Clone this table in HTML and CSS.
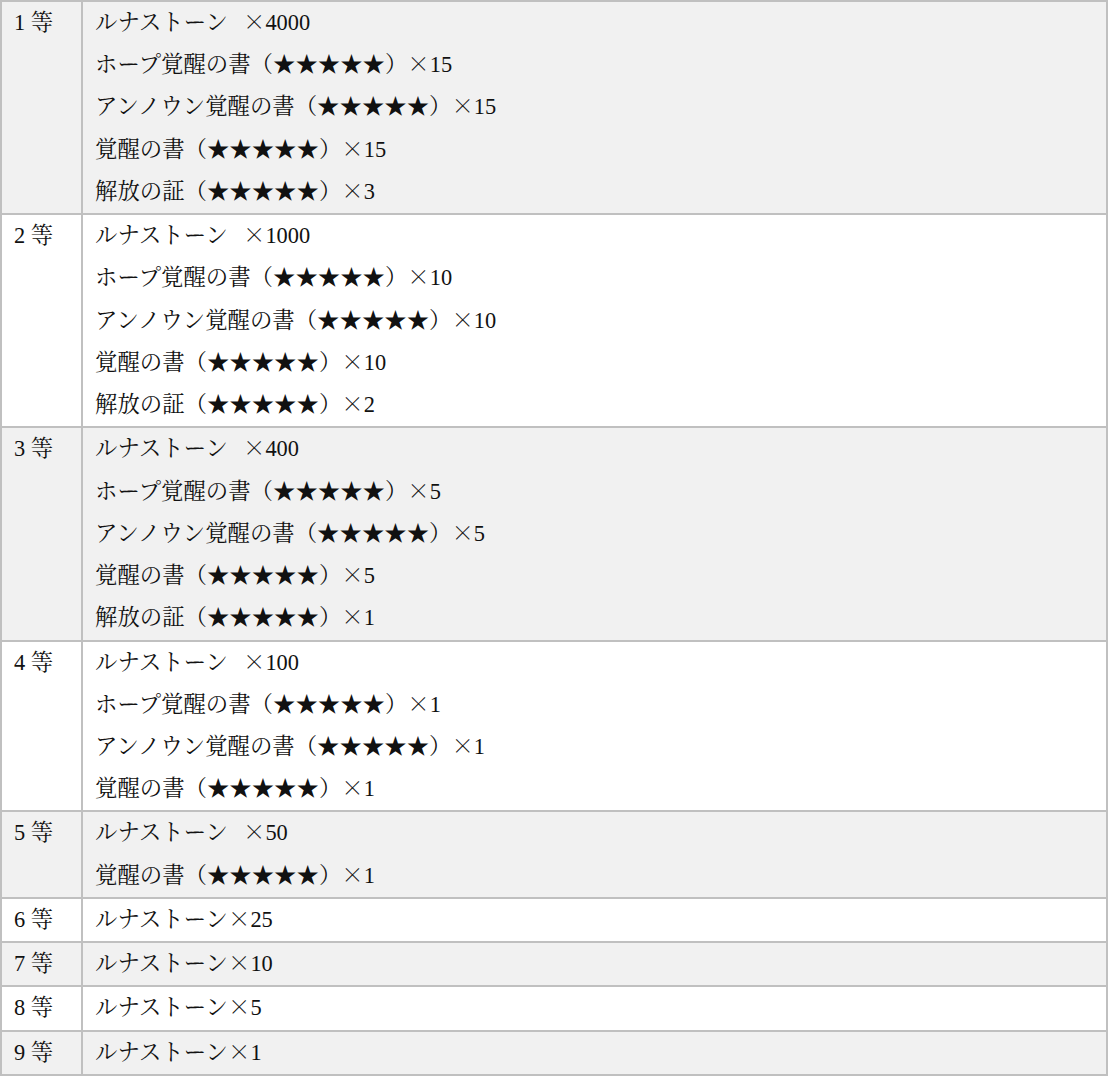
FILE: index.html
```html
<!DOCTYPE html>
<html lang="ja">
<head>
    <meta charset="UTF-8">
    <meta name="viewport" content="width=device-width, initial-scale=1.0">
    <title>ランキング報酬</title>
    <link rel="stylesheet" href="styles.css">
</head>
<body>
    <table class="prize-table">
        <tr>
            <th class="rank">1 等</th>
            <td class="items">
                ルナストーン<span class="mul gap">×</span>4000<br>
                ホープ覚醒の書（★★★★★）<span class="mul">×</span>15<br>
                アンノウン覚醒の書（★★★★★）<span class="mul">×</span>15<br>
                覚醒の書（★★★★★）<span class="mul">×</span>15<br>
                解放の証（★★★★★）<span class="mul">×</span>3
            </td>
        </tr>
        <tr>
            <th class="rank">2 等</th>
            <td class="items">
                ルナストーン<span class="mul gap">×</span>1000<br>
                ホープ覚醒の書（★★★★★）<span class="mul">×</span>10<br>
                アンノウン覚醒の書（★★★★★）<span class="mul">×</span>10<br>
                覚醒の書（★★★★★）<span class="mul">×</span>10<br>
                解放の証（★★★★★）<span class="mul">×</span>2
            </td>
        </tr>
        <tr>
            <th class="rank">3 等</th>
            <td class="items">
                ルナストーン<span class="mul gap">×</span>400<br>
                ホープ覚醒の書（★★★★★）<span class="mul">×</span>5<br>
                アンノウン覚醒の書（★★★★★）<span class="mul">×</span>5<br>
                覚醒の書（★★★★★）<span class="mul">×</span>5<br>
                解放の証（★★★★★）<span class="mul">×</span>1
            </td>
        </tr>
        <tr>
            <th class="rank">4 等</th>
            <td class="items">
                ルナストーン<span class="mul gap">×</span>100<br>
                ホープ覚醒の書（★★★★★）<span class="mul">×</span>1<br>
                アンノウン覚醒の書（★★★★★）<span class="mul">×</span>1<br>
                覚醒の書（★★★★★）<span class="mul">×</span>1
            </td>
        </tr>
        <tr>
            <th class="rank">5 等</th>
            <td class="items">
                ルナストーン<span class="mul gap">×</span>50<br>
                覚醒の書（★★★★★）<span class="mul">×</span>1
            </td>
        </tr>
        <tr>
            <th class="rank">6 等</th>
            <td class="items">ルナストーン<span class="mul">×</span>25</td>
        </tr>
        <tr>
            <th class="rank">7 等</th>
            <td class="items">ルナストーン<span class="mul">×</span>10</td>
        </tr>
        <tr>
            <th class="rank">8 等</th>
            <td class="items">ルナストーン<span class="mul">×</span>5</td>
        </tr>
        <tr>
            <th class="rank">9 等</th>
            <td class="items">ルナストーン<span class="mul">×</span>1</td>
        </tr>
    </table>
</body>
</html>
```

FILE: styles.css
```css
:root {
    --row-alt: #f1f1f1;
    --border: #c0c0c0;
    --text-color: #111;
}

body {
    margin: 0;
    background: white;
    font-family: 'Liberation Serif', 'Noto Serif CJK JP', 'Noto Sans CJK JP', serif;
    font-size: 22.4px;
    color: var(--text-color);
}

.prize-table {
    width: 100%;
    border-collapse: collapse;
    border: 2px solid var(--border);
}

.prize-table tr:nth-child(odd) {
    background: var(--row-alt);
}

.prize-table th,
.prize-table td {
    border: 2px solid var(--border);
    padding: 0 12px;
    line-height: 42.24px;
    vertical-align: top;
    text-align: left;
    font-weight: normal;
}

.rank {
    width: 55px;
    white-space: nowrap;
}

/* multiplication sign in the CJK font, kept off the line box height */
.mul {
    font-family: 'Noto Serif CJK JP', 'Noto Sans CJK JP', sans-serif;
    line-height: 1;
}

.mul.gap {
    margin-left: 15px;
}
```
